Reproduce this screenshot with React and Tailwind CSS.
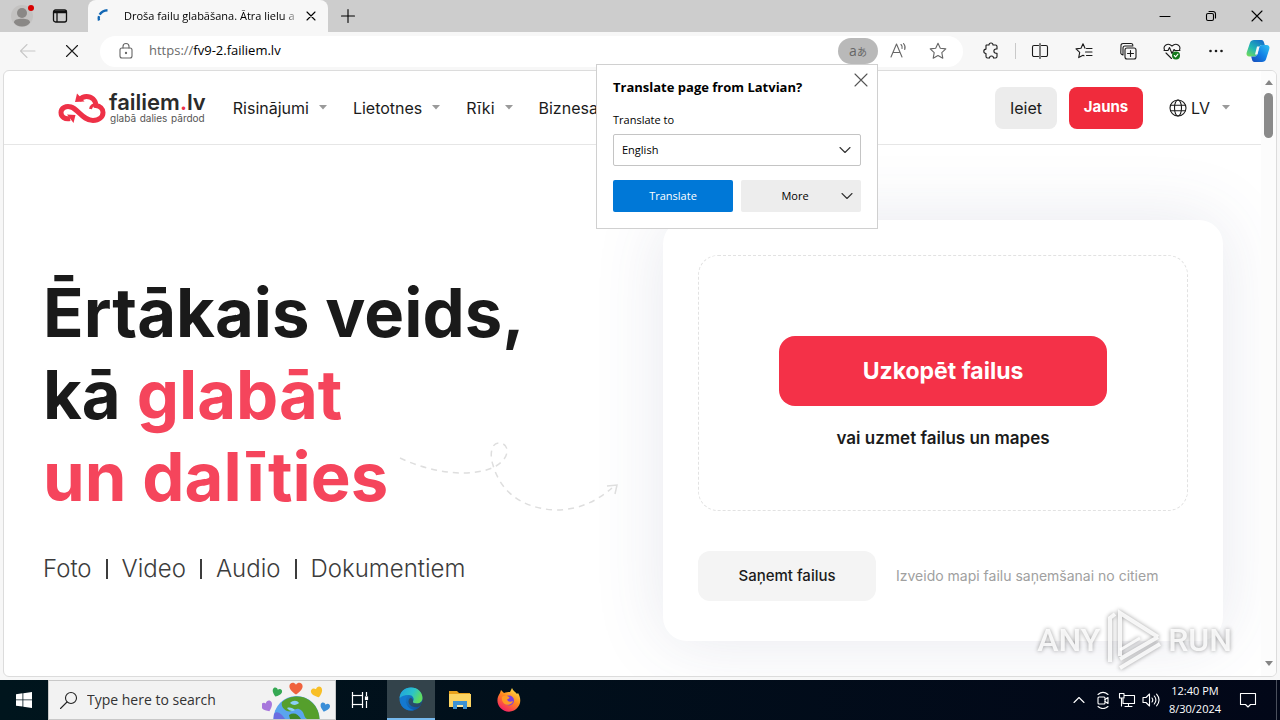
import React, { useState } from 'react';

const NAV_ITEMS = ['Risinājumi', 'Lietotnes', 'Rīki', 'Biznesam'];
const FILE_KINDS = ['Foto', 'Video', 'Audio', 'Dokumentiem'];

function Icon({ children, size = 'size-5', className = '', viewBox = '0 0 20 20' }) {
  return (
    <svg
      viewBox={viewBox}
      className={`${size} shrink-0 ${className}`}
      fill="none"
      stroke="currentColor"
      strokeWidth="1.1"
      strokeLinecap="round"
      strokeLinejoin="round"
      aria-hidden="true"
    >
      {children}
    </svg>
  );
}

function IconButton({ label, className = '', children }) {
  return (
    <button type="button" aria-label={label} className={`flex shrink-0 items-center justify-center ${className}`}>
      {children}
    </button>
  );
}

const Caret = () => (
  <svg viewBox="0 0 8 5" className="h-[5px] w-2 shrink-0 fill-[#9a9a9a]" aria-hidden="true">
    <path d="M0 0h8L4 4.5z" />
  </svg>
);

const ChevronDown = ({ className = '' }) => (
  <Icon size="size-4" viewBox="0 0 16 16" className={className}>
    <path d="M3 5.5l5 5 5-5" />
  </Icon>
);

function TabBar() {
  return (
    <div className="flex h-8 shrink-0 items-stretch bg-[#cdcdcd] text-black">
      <IconButton label="Profile" className="w-11">
        <svg viewBox="0 0 24 24" className="size-6" aria-hidden="true">
          <circle cx="12" cy="12" r="11" fill="#c3c2c1" />
          <circle cx="12" cy="9" r="5" fill="#8a8886" />
          <path d="M4 18.5c0-3 3.5-3.800 8-3.800s8 .8 8 3.800c-1.500 2.700-4.500 4-8 4s-6.500-1.300-8-4z" fill="#8a8886" />
          <circle cx="21" cy="4" r="3" fill="#d80000" />
        </svg>
      </IconButton>
      <IconButton label="Tab actions" className="w-8">
        <svg viewBox="0 0 16 16" className="size-4" fill="none" stroke="#111" strokeWidth="1.3" aria-hidden="true">
          <rect x="1.5" y="2" width="13" height="12" rx="2" />
          <path d="M1.5 4h13" strokeWidth="2.5" />
          <path d="M5 4v10" />
        </svg>
      </IconButton>
      <div className="ml-3 flex w-60 items-center rounded-t-lg bg-[#f7f7f7] pr-[7px] pl-2">
        <svg viewBox="0 0 16 16" className="size-4 shrink-0" fill="none" stroke="#1267b4" strokeWidth="2.4" aria-hidden="true">
          <path d="M3 12.500C1.500 8 5 2.500 11.500 2.200" strokeDasharray="4.500 1.500 12" />
        </svg>
        <span className="ml-3 flex-1 overflow-hidden text-[11px] whitespace-nowrap [mask-image:linear-gradient(to_right,black_90%,transparent)]">
          Droša failu glabāšana. Ātra lielu a
        </span>
        <IconButton label="Close tab" className="size-5">
          <Icon size="size-3" viewBox="0 0 12 12">
            <path d="M2 2l8 8M10 2l-8 8" />
          </Icon>
        </IconButton>
      </div>
      <IconButton label="New tab" className="w-10">
        <Icon size="size-4" viewBox="0 0 16 16">
          <path d="M8 1.5v13M1.5 8h13" />
        </Icon>
      </IconButton>
      <div className="ml-auto flex">
        <IconButton label="Minimize" className="w-[46px]">
          <Icon size="size-3" viewBox="0 0 12 12"><path d="M1 6.5h10" /></Icon>
        </IconButton>
        <IconButton label="Restore" className="w-[46px]">
          <Icon size="size-3" viewBox="0 0 12 12">
            <rect x="1.5" y="3.5" width="7" height="7" rx="1.5" />
            <path d="M4 1.5h4a2.500 2.500 0 0 1 2.500 2.500v4" />
          </Icon>
        </IconButton>
        <IconButton label="Close" className="w-[46px]">
          <Icon size="size-3" viewBox="0 0 12 12"><path d="M1 1l10 10M11 1L1 11" /></Icon>
        </IconButton>
      </div>
    </div>
  );
}

function TranslatePopup() {
  const [language, setLanguage] = useState('English');

  return (
    <div className="absolute top-full right-0 z-20 w-[282px] border border-[#d0d0d0] bg-white px-4 pt-3 pb-4 text-[11px] text-black">
      <h2 className="text-[13px] leading-5 font-bold">Translate page from Latvian?</h2>
      <button type="button" aria-label="Close" className="absolute top-[7px] right-2 text-[#555]">
        <Icon size="size-4" viewBox="0 0 16 16"><path d="M2 2l12 12M14 2L2 14" /></Icon>
      </button>
      <label htmlFor="language" className="mt-[13px] block leading-5">Translate to</label>
      <div className="relative mt-1">
        <select
          id="language"
          value={language}
          onChange={(e) => setLanguage(e.target.value)}
          className="h-8 w-full appearance-none rounded-xs border border-[#c4c4c4] bg-white px-2"
        >
          <option>English</option>
          <option>Latvian</option>
        </select>
        <ChevronDown className="pointer-events-none absolute top-2 right-2 text-[#333]" />
      </div>
      <div className="mt-[14px] grid grid-cols-2 gap-2">
        <button type="button" className="h-8 rounded-xs bg-[#0078d7] text-white">Translate</button>
        <button type="button" className="relative h-8 rounded-xs bg-[#ededed] pr-3">
          More
          <ChevronDown className="absolute top-2 right-1.5 text-[#333]" />
        </button>
      </div>
    </div>
  );
}

function Toolbar() {
  return (
    <div className="flex h-[38px] shrink-0 items-center bg-[#f7f7f7] pr-1 text-[#1b1b1b]">
      <IconButton label="Back" className="ml-1 w-12 text-[#c8c8c8]">
        <Icon><path d="M17 10H2.500M9 3.500L2.500 10 9 16.500" /></Icon>
      </IconButton>
      <IconButton label="Stop" className="w-10">
        <Icon size="size-4" viewBox="0 0 16 16"><path d="M2.500 2.500l11 11M13.500 2.500l-11 11" /></Icon>
      </IconButton>
      <div className="ml-2 flex h-[31px] min-w-0 flex-1 items-center rounded-full bg-white pr-[5px] pl-4">
        <Icon className="text-[#666]">
          <rect x="4" y="7" width="12" height="10" rx="2" />
          <path d="M7 7V5.500a3 3 0 0 1 6 0V7" />
          <circle cx="10" cy="12" r="0.6" fill="currentColor" />
        </Icon>
        <label htmlFor="address" className="ml-[13px] text-[13px] text-[#6b6b6b]">https://</label>
        <input id="address" defaultValue="fv9-2.failiem.lv" className="min-w-0 flex-1 bg-transparent text-[13px] text-black outline-none" />
        <div className="relative">
          <button type="button" aria-label="Translate" className="flex h-[26px] w-10 items-center justify-center rounded-full bg-[#b9b9b9] text-[#666]">
            <span className="text-sm">a</span>
            <span className="font-['Noto_Sans_CJK_JP',sans-serif] text-[10px]">あ</span>
          </button>
          <TranslatePopup />
        </div>
        <IconButton label="Read aloud" className="w-10 text-[#666]">
          <Icon>
            <path d="M3 16L8.500 3 14 16M5 11.500h7" />
            <path d="M13 3.500a4 4 0 0 1 1 4M15.500 2.500a6 6 0 0 1 1.200 6" />
          </Icon>
        </IconButton>
        <IconButton label="Favorite" className="w-10 text-[#666]">
          <Icon>
            <path d="M10 2.200l2.300 5 5.500.7-4 3.800 1 5.500-4.800-2.700-4.800 2.700 1-5.500-4-3.800 5.500-.7z" />
          </Icon>
        </IconButton>
      </div>
      <IconButton label="Extensions" className="ml-2 w-10">
        <Icon>
          <path d="M5.500 4H8a2 2 0 0 1 4 0h2.500A1.500 1.500 0 0 1 16 5.500V8h-1a2.100 2.100 0 0 0 0 4.200h1v3.300a1.500 1.500 0 0 1-1.500 1.500h-2a2 2 0 0 0-4 0h-2A1.500 1.500 0 0 1 5 15.500v-3a2.200 2.200 0 0 1 0-4.400V4.500z" />
        </Icon>
      </IconButton>
      <span className="ml-1 h-4 w-px bg-[#c9c9c9]" />
      <IconButton label="Split screen" className="ml-1 w-10">
        <Icon>
          <path d="M8.500 4.500H4a1.500 1.500 0 0 0-1.500 1.500v8A1.500 1.500 0 0 0 4 15.500h4.500M11.500 4.500H16a1.500 1.500 0 0 1 1.500 1.500v8a1.500 1.500 0 0 1-1.500 1.500h-4.500M10 2.500v15" />
        </Icon>
      </IconButton>
      <IconButton label="Favorites" className="ml-1 w-10">
        <Icon>
          <path d="M11 7.200L9 2.800 7 7.300l-5 .6 3.700 3.500-1 5.200 4.300-2.400 1 .6M12.500 7.500H18M11.500 11H18M12.500 14.500H18" />
        </Icon>
      </IconButton>
      <IconButton label="Collections" className="ml-1 w-10">
        <Icon>
          <rect x="7" y="7" width="11" height="11" rx="2" />
          <path d="M12.500 9.500v6M9.500 12.500h6M5 14l-1.500-.8c-.7-.4-.9-1.200-.7-2L3 4.500C3 3.200 4 2.500 5 2.500h8c1 0 1.700.6 1.900 1.700M5 14V7a2 2 0 0 1 2-2h7.800" />
        </Icon>
      </IconButton>
      <IconButton label="Browser essentials" className="ml-1 w-10">
        <Icon>
          <path d="M2.500 9C.8 5 5.500 1 10 5c4.500-4 9.200 0 7.500 4M2 9.500h4l1.500-3 2.500 6 2-4 1 1h5M4 12l5.500 5.500" />
          <circle cx="14" cy="14.5" r="4" fill="#12791c" stroke="none" />
          <path d="M12.300 14.500l1.300 1.300 2.300-2.600" stroke="white" />
        </Icon>
      </IconButton>
      <IconButton label="Settings and more" className="ml-1 w-10">
        <Icon>
          <g fill="currentColor" stroke="none">
            <circle cx="4.500" cy="10" r="1.300" />
            <circle cx="10" cy="10" r="1.300" />
            <circle cx="15.500" cy="10" r="1.300" />
          </g>
        </Icon>
      </IconButton>
      <IconButton label="Copilot" className="ml-1 w-9">
        <svg viewBox="0 0 24 24" className="size-6" aria-hidden="true">
          <defs>
            <linearGradient id="copilotLeft" x1="0" y1="1" x2="0.7" y2="0">
              <stop offset="0" stopColor="#7be04f" />
              <stop offset="0.5" stopColor="#22b6b4" />
              <stop offset="1" stopColor="#1674c8" />
            </linearGradient>
            <linearGradient id="copilotRight" x1="1" y1="0" x2="0" y2="1">
              <stop offset="0" stopColor="#30c4f2" />
              <stop offset="0.5" stopColor="#1280e6" />
              <stop offset="1" stopColor="#1748b8" />
            </linearGradient>
          </defs>
          <path d="M8 1h7.500c1.500 0 2 1 2.500 2.500l.8 2.500H16c-1.500 0-2.300.8-2.700 2L11 15.500c-.5 1.500-1.300 2-2.600 2H3.500C1 17.500 0 15.800.7 13.500L4 3.800C4.700 2 6 1 8 1z" fill="url(#copilotLeft)" />
          <path d="M16 23H8.500C7 23 6.300 22 6 20.500l-.8-3H8.400c1.300 0 2.100-.5 2.600-2L13.300 8c.4-1.200 1.200-2 2.700-2h4.500c2.500 0 3.500 1.800 2.800 4L20 20.200C19.400 22 18 23 16 23z" fill="url(#copilotRight)" />
          <path d="M11 7.500h2.500L11.500 15.500H9z" fill="#f7f7f7" />
        </svg>
      </IconButton>
    </div>
  );
}

function Logo() {
  return (
    <a href="#home" className="flex items-center gap-[3px]">
      <svg viewBox="0 0 48 32" className="h-8 w-12 shrink-0" fill="none" stroke="#ee3147" strokeWidth="5" aria-hidden="true">
        <path d="M12 26.500c-5 1-9-1.500-9-6s5-7 10-5.500c7 2 12 13.500 22 13.500 6 0 10-3.500 10-8 0-4-3-6.500-7-7-.5-5.500-4.500-9-9.500-9-3.500 0-5.500 1.500-7.500 3.500" />
        <path d="M19 1.500L17 10l9.500-.5z" fill="#ee3147" stroke="none" />
        <path d="M9 22.500l8.500.5-2 8z" fill="#ee3147" stroke="none" />
        <path d="M32.500 17c.5-2.800 2.500-4.500 6-4.500" strokeWidth="3" />
      </svg>
      <span className="flex flex-col">
        <span className="text-[22px] leading-5 font-semibold text-[#2b2b2b]">
          failiem<span className="text-[#ee3147]">.</span>lv
        </span>
        <span className="flex justify-between px-px text-[10px] leading-3 text-[#555]">
          <span>glabā</span>
          <span>dalies</span>
          <span>pārdod</span>
        </span>
      </span>
    </a>
  );
}

function SiteHeader() {
  return (
    <header className="flex h-[74px] items-center border-b border-[#e6e6e6] pr-[31px] pl-[54px] text-base text-[#1b1b1b]">
      <Logo />
      <nav className="ml-[27px] flex flex-1 gap-[26px]">
        {NAV_ITEMS.map((item) => (
          <a key={item} href="#menu" className="flex items-center gap-[10px]">
            {item}
            <Caret />
          </a>
        ))}
      </nav>
      <button type="button" className="h-[42px] w-[62px] rounded-lg bg-[#ececec]">Ieiet</button>
      <button type="button" className="ml-3 h-[42px] w-[74px] rounded-lg bg-[#f02b3c] text-[15px] font-bold text-white">Jauns</button>
      <button type="button" className="ml-[26px] flex items-center gap-1">
        <Icon size="size-[18px]" viewBox="0 0 18 18">
          <circle cx="9" cy="9" r="8" />
          <ellipse cx="9" cy="9" rx="3.5" ry="8" />
          <path d="M1.500 6.300h15M1.500 11.700h15" />
        </Icon>
        LV
        <span className="ml-2"><Caret /></span>
      </button>
    </header>
  );
}

function Hero() {
  return (
    <main className="relative flex flex-1 items-start justify-between overflow-hidden pt-[75px] pr-[38px] pl-[39px]">
      <section className="relative pt-[52px]">
        <h1 className="text-[67px] leading-[82px] font-bold whitespace-nowrap text-[#1a1a1a]">
          Ērtākais veids,
          <br />
          kā <span className="text-[#f5455c]">glabāt</span>
          <br />
          <span className="text-[#f5455c]">un dalīties</span>
        </h1>
        <ul className="mt-[35px] flex text-2xl leading-8 font-light text-[#3c3c3c]">
          {FILE_KINDS.map((kind, i) => (
            <li key={kind} className="flex items-center">
              {i > 0 && <span className="mx-[14px] h-5 w-[2px] bg-[#3c3c3c]" />}
              {kind}
            </li>
          ))}
        </ul>
        {/* dashed arrow pointing at the upload card */}
        <svg
          viewBox="0 0 220 72"
          className="absolute top-[221px] left-[356px] h-[72px] w-[220px]"
          fill="none"
          stroke="#dedede"
          strokeWidth="1.5"
          aria-hidden="true"
        >
          <path
            d="M1 17C35 33 75 37 97 25c14-8 14-22 4-23-10-1-10 14-7 22 6 22 24 43 62 45 24 0 42-9 57-22"
            strokeDasharray="6 5"
          />
          <path d="M208 45l10-1-2 9" />
        </svg>
      </section>

      <section className="w-[560px] shrink-0 rounded-3xl bg-white p-[35px] pb-10 shadow-[0_0_70px_rgba(70,80,120,0.13)]">
        <div className="flex h-64 flex-col items-center justify-center rounded-[20px] border border-dashed border-[#e2e2e2] pt-5">
          <button type="button" className="h-[70px] w-[328px] rounded-2xl bg-[#f43148] text-[23px] font-bold text-white">
            Uzkopēt failus
          </button>
          <p className="mt-5 text-[17px] leading-6 font-semibold text-[#1b1b1b]">vai uzmet failus un mapes</p>
        </div>
        <div className="mt-10 flex items-center gap-5">
          <button type="button" className="h-[50px] w-[178px] rounded-xl bg-[#f4f4f4] text-[15px] font-medium text-[#1b1b1b]">
            Saņemt failus
          </button>
          <p className="text-sm text-[#a0a0a0]">Izveido mapi failu saņemšanai no citiem</p>
        </div>
      </section>
    </main>
  );
}

function Scrollbar() {
  return (
    <div className="flex w-[15px] shrink-0 flex-col items-center justify-between bg-[#fcfcfc] pt-[9px] pb-[10px]">
      <div className="flex flex-col items-center gap-2">
        <svg viewBox="0 0 8 5" className="h-[5px] w-2 fill-[#858585]" aria-hidden="true"><path d="M0 5h8L4 0z" /></svg>
        <div className="h-[45px] w-[9px] rounded-full bg-[#8a8a8a]" />
      </div>
      <svg viewBox="0 0 8 5" className="h-[5px] w-2 fill-[#858585]" aria-hidden="true"><path d="M0 0h8L4 5z" /></svg>
    </div>
  );
}

function Watermark() {
  return (
    <div className="pointer-events-none absolute right-12 bottom-12 z-30 flex h-16 items-center gap-1 font-['Roboto',sans-serif] text-[32px] font-medium text-white/85 drop-shadow-[0_0_2px_rgba(0,0,0,0.45)]">
      <span>ANY</span>
      <svg viewBox="0 0 60 64" className="h-16 w-[60px]" fill="none" stroke="white" strokeOpacity="0.85" strokeWidth="4" aria-hidden="true">
        <path d="M6 54V10l5-4M16 48V5l38 24M54 29L16 51M16 60l40-24" />
        <path d="M16 42l20-12" strokeWidth="3" />
      </svg>
      <span>RUN</span>
    </div>
  );
}

const HEARTS = [
  { x: 34, y: 7, tilt: 0, scale: 1.1, fill: '#f0623e' },
  { x: 15, y: 11, tilt: 20, scale: 0.8, fill: '#35a853' },
  { x: 55, y: 11, tilt: -20, scale: 0.95, fill: '#f8bf26' },
  { x: 5, y: 25, tilt: -25, scale: 0.95, fill: '#a777dc' },
  { x: 63, y: 26, tilt: 15, scale: 0.8, fill: '#3a8ed8' },
];

function GlobeArt() {
  return (
    <svg viewBox="0 0 72 38" className="h-[38px] w-[72px] shrink-0 self-end" aria-hidden="true">
      <circle cx="34.5" cy="38" r="23" fill="#5aa5ee" />
      <path d="M12 33c2-3 5-2 8 1l3 4H11.500z" fill="#6a6ee0" />
      <path d="M20 21c6-6 19-8 27-2 7 5 10 11 10.500 19H45c-4-2-2-8-8-10-5-1-7 4-12 2-4-2-6-5-5-9z" fill="#559f2c" />
      <path d="M28 22c3-3 7-3 9 0-2 2-6 3-9 0zM25 27c3-1 6 0 8 2-2 2-6 1-8-2z" fill="#8cd0f6" />
      <path d="M27 34c5-3 9-1 12 4H28z" fill="#3f8726" />
      {HEARTS.map((h) => (
        <path
          key={h.fill}
          d="M0 6C-3 4-6 1.500-6-1.500-6-5-2-6 0-3 2-6 6-5 6-1.500 6 1.500 3 4 0 6z"
          fill={h.fill}
          transform={`translate(${h.x} ${h.y}) rotate(${h.tilt}) scale(${h.scale})`}
        />
      ))}
    </svg>
  );
}

function Taskbar() {
  return (
    <footer className="flex h-10 shrink-0 items-stretch bg-linear-to-r from-[#00151d] to-[#020718] text-white">
      <IconButton label="Start" className="w-12">
        <svg viewBox="0 0 16 16" className="size-4 fill-white" aria-hidden="true">
          <path d="M0 2.200l6.500-.9v6.200H0zM7.300 1.200L16 0v7.500H7.300zM0 8.300h6.500v6.300L0 13.700zM7.300 8.300H16V16l-8.700-1.200z" />
        </svg>
      </IconButton>
      <div className="flex w-72 items-center border border-[#c8c8c8] bg-[#f2f2f2] pr-px pl-[10px] text-[#222]">
        <Icon><circle cx="12" cy="8" r="5.5" /><path d="M8 12l-6.500 6.500" /></Icon>
        <input aria-label="Search" placeholder="Type here to search" className="ml-2 min-w-0 flex-1 bg-transparent text-sm outline-none placeholder:text-[#333]" />
        <GlobeArt />
      </div>
      <IconButton label="Task view" className="w-[51px] pr-[3px]">
        <svg viewBox="0 0 18 18" className="size-[18px]" fill="none" stroke="white" strokeWidth="1.2" aria-hidden="true">
          <path d="M1.500 1v3.500h10V1M1.500 17v-3.500h10V17M15.500 1v4M15.500 10v7" />
          <rect x="1.5" y="4.5" width="10" height="9" />
          <rect x="14.5" y="6" width="2" height="2.5" fill="white" />
        </svg>
      </IconButton>
      <IconButton label="Microsoft Edge" className="w-12 border-b-2 border-[#76b9ed] bg-[#33434b]">
        <svg viewBox="0 0 24 24" className="size-6" aria-hidden="true">
          <defs>
            <linearGradient id="edgeTop" x1="0" y1="0" x2="1" y2="0.4">
              <stop offset="0" stopColor="#1f9fe0" />
              <stop offset="0.6" stopColor="#2bc3c9" />
              <stop offset="1" stopColor="#5fdc60" />
            </linearGradient>
            <linearGradient id="edgeBase" x1="0" y1="0" x2="1" y2="1">
              <stop offset="0" stopColor="#1b8fdc" />
              <stop offset="1" stopColor="#0c4a9c" />
            </linearGradient>
          </defs>
          <circle cx="12" cy="12" r="11.5" fill="url(#edgeBase)" />
          <path d="M.6 11C1 4.500 6 .5 12 .5c7 0 11.500 5 11.500 10.500 0 3.500-2.500 5.500-6 5.500-2.500 0-4-1-3.500-2 2-3-.5-6.500-4-6.500C6 8 2 9 .6 11z" fill="url(#edgeTop)" />
          <path d="M14 14.500c-.5 1 1 2 3.500 2 2.400 0 4.100-.6 5-1.800.5.500.3 1.200 0 1.800-1 1.800-2.500 3-3.500 3.500-5 1-9.500-2-9.500-5.500 0-2 1-3.300 2.300-3.800 1.700.8 2.700 2.300 2.200 3.800z" fill="#33434b" opacity="0.7" />
          <path d="M9.500 8.500C7 10 6 13 7.500 17c1.200 3 4 5.500 7.500 6-6 2-12-2-13.500-7C.5 11 4 8 9.500 8.500z" fill="#1479d0" />
        </svg>
      </IconButton>
      <IconButton label="File Explorer" className="w-[50px]">
        <svg viewBox="0 0 22 20" className="h-5 w-[22px]" aria-hidden="true">
          <path d="M0 1h8l2 2h11v4H0z" fill="#e9a21c" />
          <path d="M0 4h22v13H0z" fill="#fcd462" />
          <path d="M4 11h14v8h-4v-4H8v4H4z" fill="#3b92d4" />
          <path d="M8 15h6v2H8z" fill="#fde9a0" />
        </svg>
      </IconButton>
      <IconButton label="Firefox" className="w-12">
        <svg viewBox="0 0 24 24" className="size-6" aria-hidden="true">
          <defs>
            <linearGradient id="fox" x1="0.8" y1="0" x2="0.2" y2="1">
              <stop offset="0" stopColor="#ffe34a" />
              <stop offset="0.45" stopColor="#ff8a1e" />
              <stop offset="1" stopColor="#f5156c" />
            </linearGradient>
          </defs>
          <path d="M3 5l1-3 3 3c2-1 4-1 6-1l2-4c1 3 4 4 5 6l1-1c3 5 3 10 0 14-4 6-13 6-17.500 1S0 9 3 5z" fill="url(#fox)" />
          <circle cx="12" cy="12.5" r="5" fill="#7a3fe0" />
          <path d="M5 9c3-2 5-1 7 0 1.500 1-1 2-2 2.500.5 2 3 3 6 1.500-1 4-6 5-9 2.500C5 13.500 4.500 11 5 9z" fill="#ff9a24" />
        </svg>
      </IconButton>
      <div className="ml-auto flex items-center pr-[3px]">
        <IconButton label="Hidden icons" className="w-6">
          <Icon size="size-4" viewBox="0 0 16 16"><path d="M3 10.500l5-5 5 5" /></Icon>
        </IconButton>
        <IconButton label="Meet now" className="w-6">
          <Icon size="size-[18px]" viewBox="0 0 18 18">
            <rect x="4" y="6" width="7" height="7" rx="1" />
            <path d="M11 8.500l3-2v6l-3-2M4 3.500C7 1 11 1 14 3.500M4 15.500c3 2.500 7 2.500 10 0" />
          </Icon>
        </IconButton>
        <IconButton label="Network" className="w-6">
          <Icon size="size-[18px]" viewBox="0 0 18 18">
            <path d="M6 4.500h10.500v8H5V8M10.500 12.500v3M7 15.500h7M1.500 2.500H6V7H1.500zM3.500 7v8" />
          </Icon>
        </IconButton>
        <IconButton label="Volume" className="w-6">
          <Icon size="size-[18px]" viewBox="0 0 18 18">
            <path d="M1 6.500h3L7.500 3v12L4 11.500H1zM10 7c1 1.300 1 2.700 0 4M12.300 5c2 2.500 2 5.500 0 8M14.600 3.200c3 3.500 3 8 0 11.600" />
          </Icon>
        </IconButton>
        <div className="w-16 text-center text-[11px] leading-[18px] whitespace-nowrap">
          <div>12:40 PM</div>
          <div>8/30/2024</div>
        </div>
        <IconButton label="Notifications" className="mr-2 w-[41px]">
          <Icon size="size-[18px]" viewBox="0 0 18 18"><path d="M1.500 2.500h15v11h-5L9 16l-2.500-2.500h-5z" /></Icon>
        </IconButton>
        <span className="h-10 w-px bg-[#4a4f5c]" />
      </div>
    </footer>
  );
}

export default function App() {
  return (
    <div className="relative flex h-screen flex-col overflow-hidden bg-[#f7f7f7] font-['Open_Sans','Noto_Sans',sans-serif]">
      <TabBar />
      <Toolbar />
      <div className="mx-[3px] mb-[3px] flex min-h-0 flex-1 overflow-hidden rounded-md border border-[#dcdcdc] bg-white">
        <div className="flex min-w-0 flex-1 flex-col font-['Inter',sans-serif]">
          <SiteHeader />
          <Hero />
        </div>
        <Scrollbar />
      </div>
      <Taskbar />
      <Watermark />
    </div>
  );
}
